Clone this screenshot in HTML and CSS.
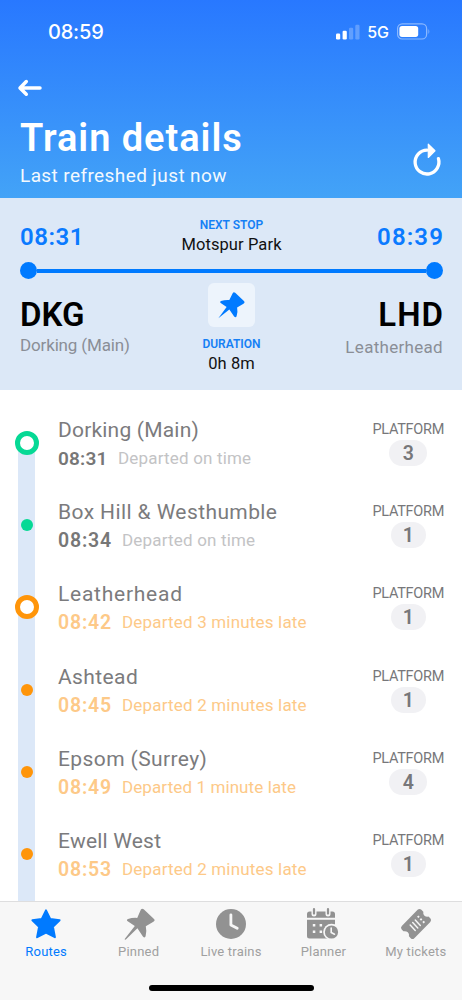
FILE: index.html
```html
<!DOCTYPE html>
<html lang="en">
<head>
<meta charset="utf-8">
<title>Train details</title>
<link rel="stylesheet" href="styles.css">
</head>
<body>
<div class="app">
  <header class="header">
    <div class="status-bar">
      <span class="clock">08:59</span>
      <span class="signals">
        <svg class="cell" viewBox="0 0 24 16"><rect x="0" y="9.5" width="4.2" height="6" rx="1.2"/><rect x="6.6" y="6.8" width="4.2" height="8.7" rx="1.2"/><rect class="dim" x="13" y="3.8" width="4.2" height="11.7" rx="1.2"/><rect class="dim" x="19.3" y="0.8" width="4.2" height="14.7" rx="1.2"/></svg>
        <span class="network">5G</span>
        <svg class="battery" viewBox="0 0 33 17"><rect class="shell" x="0.6" y="0.8" width="29" height="15.2" rx="4.6"/><rect x="2.4" y="2.9" width="18.8" height="11" rx="2.6"/><path class="dim" d="M30.8 6q1.7.8 1.7 2.5t-1.7 2.500z"/></svg>
      </span>
    </div>
    <svg class="back" viewBox="0 0 24 18"><path d="M22 9H2.600M8.300 2.600L2 9l6.300 6.200"/></svg>
    <div class="title-row">
      <div>
        <h1 class="title">Train details</h1>
        <p class="subtitle">Last refreshed just now</p>
      </div>
      <svg class="refresh" viewBox="0 0 28 33"><path class="ring" d="M14 7.200A11.900 11.900 0 1 0 25.400 15.600"/><path class="tip" d="M15.300 1.200v13.300L22 7.800z"/></svg>
    </div>
  </header>

  <section class="summary">
    <div class="times">
      <span class="time">08:31</span>
      <div class="centre"><span class="caption wide">NEXT STOP</span><span class="value next">Motspur Park</span></div>
      <span class="time arrival">08:39</span>
    </div>
    <div class="track"><i class="end"></i><i class="line"></i><i class="end"></i></div>
    <div class="places">
      <div class="place"><span class="code">DKG</span><span class="name">Dorking (Main)</span></div>
      <div class="centre">
        <span class="pin-box"><svg class="pin" viewBox="0 0 32 32"><path d="M1.500 30.200L10.600 17.700L4.100 13.200Q2.400 11.800 4.400 10.900Q8.600 9.600 13.600 9.900L17.300 2.400Q18.400.400 20.100 2L29.700 11.100Q31.300 13 29.200 14L22.200 18.200Q23.200 23.500 21.600 27.900Q20.800 30 18.900 28.100L13.600 20.400z"/></svg></span>
        <span class="caption">DURATION</span><span class="value">0h 8m</span>
      </div>
      <div class="place right"><span class="code">LHD</span><span class="name">Leatherhead</span></div>
    </div>
  </section>

  <main class="stops">
    <article class="stop first"><div class="rail"><i class="ring-dot green"></i></div><div class="info"><h2 class="tight">Dorking (Main)</h2><p class="ontime"><b>08:31</b><span>Departed on time</span></p></div><div class="platform"><span class="label">PLATFORM</span><span class="number">3</span></div></article>
    <article class="stop"><div class="rail"><i class="dot green"></i></div><div class="info"><h2>Box Hill &amp; Westhumble</h2><p class="ontime"><b>08:34</b><span>Departed on time</span></p></div><div class="platform"><span class="label">PLATFORM</span><span class="number one">1</span></div></article>
    <article class="stop"><div class="rail"><i class="ring-dot orange"></i></div><div class="info"><h2 class="loose">Leatherhead</h2><p class="late"><b>08:42</b><span>Departed 3 minutes late</span></p></div><div class="platform"><span class="label">PLATFORM</span><span class="number one">1</span></div></article>
    <article class="stop"><div class="rail"><i class="dot orange"></i></div><div class="info"><h2>Ashtead</h2><p class="late"><b>08:45</b><span>Departed 2 minutes late</span></p></div><div class="platform"><span class="label">PLATFORM</span><span class="number one">1</span></div></article>
    <article class="stop"><div class="rail"><i class="dot orange"></i></div><div class="info"><h2>Epsom (Surrey)</h2><p class="late"><b>08:49</b><span class="minute">Departed 1 minute late</span></p></div><div class="platform"><span class="label">PLATFORM</span><span class="number">4</span></div></article>
    <article class="stop last"><div class="rail"><i class="dot orange"></i></div><div class="info"><h2 class="tight">Ewell West</h2><p class="late"><b>08:53</b><span>Departed 2 minutes late</span></p></div><div class="platform"><span class="label">PLATFORM</span><span class="number one">1</span></div></article>
  </main>

  <footer class="footer">
    <nav class="tabs">
      <a class="tab active"><svg viewBox="0 0 32 32"><path stroke-linejoin="round" stroke-width="2" stroke="currentColor" d="M16 2.400L20.200 10.900L29.600 12.200L22.900 18.700L24.900 29.200L16 24.700L7.100 29.200L9.100 18.700L2.400 12.200L11.800 10.900z"/></svg><span>Routes</span></a>
      <a class="tab"><svg viewBox="0 0 32 32"><path d="M1.500 31.200L11.800 18L4.700 13.200Q3 11.800 5 10.900Q9.200 9.600 14.200 9.900L17.900 1.600Q19 0 20.700 1.300L31 11Q32.500 12.600 30.400 13.700L22.800 18.200Q24 23.500 22.600 28.300Q21.800 30.400 19.900 28.500L14.400 20.300L2.600 31.700z"/></svg><span>Pinned</span></a>
      <a class="tab"><svg viewBox="0 0 32 32"><circle cx="16" cy="16" r="15"/><path class="cut" d="M15.900 6.800V17l6.300 3.300"/></svg><span>Live trains</span></a>
      <a class="tab planner"><svg viewBox="0 0 34 32"><path d="M1 9.800V6q0-2.600 2.600-2.600h22.800Q29 3.400 29 6v3.800zM1 11.800h28V30.500H3.600Q1 30.500 1 28z"/><path class="gap" d="M8 1v5M22 1v5"/><path class="hooks" d="M8 1v4.600M22 1v4.600"/><g class="paper"><rect x="6.800" y="16" width="2.500" height="2.500"/><rect x="13.600" y="16" width="2.500" height="2.500"/><rect x="6.800" y="22.500" width="2.500" height="2.500"/><rect x="13.600" y="22.500" width="2.500" height="2.500"/><circle cx="25.500" cy="24" r="8.300"/></g><circle cx="25.500" cy="24" r="6.600"/><path class="clock-hands" d="M25.200 20v4.500l3.300 1.700"/></svg><span>Planner</span></a>
      <a class="tab ticket"><svg viewBox="0 0 34 34"><path d="M18.700 1.900q2-1.900 4 0l2.100 2q-.6 2.800 1.200 4.300 1.800 1.400 4.200.9l2 1.900q1.700 1.900 0 3.800L15.200 32.100q-1.900 1.900-3.800 0l-1.900-2q.6-2.700-1.200-4.300-1.800-1.500-4.600-1l-1.900-1.900q-1.600-1.900.1-3.800z"/><path class="stubs" d="M10.800 18.100l5.400 5.800M13.500 15.400l5.400 5.800M16.200 12.700l5.400 5.800"/><path class="perforation" d="M18.800 8.600l7.800 7.800"/></svg><span>My tickets</span></a>
    </nav>
    <i class="home-indicator"></i>
  </footer>
</div>
</body>
</html>
```
FILE: styles.css
```css
* { box-sizing: border-box; margin: 0; padding: 0; }
body { font-family: Roboto, "Liberation Sans", sans-serif; background: #fff; }
svg { display: block; fill: currentColor; overflow: visible; }
i { display: block; }
.app { width: 462px; height: 1000px; display: flex; flex-direction: column; overflow: hidden; }

.header { height: 198px; flex: none; background: linear-gradient(#2878ff, #43a3f7); color: #fff; }
.status-bar { height: 63px; padding: 0 32px 0 48px; display: flex; justify-content: space-between; align-items: center; font-family: Inter, sans-serif; font-weight: 600; }
.clock { font-size: 20px; letter-spacing: -0.2px; font-weight: 500; }
.signals { display: flex; align-items: center; }
.cell { width: 24px; height: 16px; }
.dim { opacity: 0.25; }
.network { margin: 0 8px 0 7px; font-size: 16px; font-weight: 500; }
.battery { width: 33px; height: 17px; }
.shell { fill: none; stroke: #fff; stroke-opacity: 0.45; stroke-width: 1.200; }
.back { width: 24px; height: 18px; margin: 16px 0 0 18px; fill: none; stroke: #fff; stroke-width: 3.500; stroke-linecap: round; stroke-linejoin: round; }
.title-row { display: flex; justify-content: space-between; padding: 18px 21px 0 20px; }
.title { font-size: 38px; line-height: 46px; font-weight: 600; letter-spacing: 0.95px; }
.subtitle { font-size: 19px; line-height: 27px; letter-spacing: 0.4px; padding-top: 1px; opacity: 0.94; }
.refresh { width: 28px; height: 33px; margin-top: 28px; }
.ring { fill: none; stroke: #fff; stroke-width: 3.300; stroke-linecap: round; }
.tip { stroke: #fff; stroke-width: 1.200; stroke-linejoin: round; }

.summary { height: 192px; flex: none; background: #dce8f7; padding: 18px 19px 0 20px; }
.times { height: 46px; display: grid; grid-template-columns: 1fr auto 1fr; }
.time { color: #0a7aff; font-size: 24px; line-height: 43px; font-weight: 600; letter-spacing: 0.5px; }
.arrival { text-align: right; letter-spacing: 1.100px; margin-right: -1px; }
.centre { display: flex; flex-direction: column; align-items: center; }
.caption { color: #1580f5; font-size: 12px; line-height: 17px; font-weight: 600; padding-top: 1px; }
.value { color: #111; font-size: 16.500px; line-height: 22px; letter-spacing: 0.1px; }
.track { height: 17px; display: flex; align-items: center; }
.end { width: 17px; height: 17px; border-radius: 50%; background: #007aff; }
.line { flex: 1; height: 4px; background: #007aff; }
.places { display: grid; grid-template-columns: 1fr auto 1fr; padding-top: 4px; }
.place { display: flex; flex-direction: column; padding-top: 11px; }
.right { align-items: flex-end; }
.code { font-size: 33px; line-height: 42px; font-weight: 600; color: #000; }
.right .code { letter-spacing: 1px; margin-right: -1px; }
.name { font-size: 17px; line-height: 18px; color: #8a8e96; letter-spacing: -0.15px; }
.right .name { line-height: 22px; letter-spacing: 0.3px; }
.pin-box { width: 47px; height: 44px; border-radius: 6px; background: #edf4fc; color: #007aff; display: grid; place-items: center; margin-bottom: 8px; }
.pin { width: 29px; height: 29px; }

.stops { flex: 1; padding-top: 12px; overflow: hidden; min-height: 0; }
.stop { height: 82.200px; display: grid; grid-template-columns: 17px 1fr auto; padding: 0 18px; }
.rail { background: #dce8f8; display: flex; justify-content: center; align-items: center; }
.first .rail { background: linear-gradient(transparent 41px, #dce8f8 41px); }
.last .rail { height: 110px; padding-bottom: 28px; }
.ring-dot { flex: none; width: 24px; height: 24px; border: 5px solid; border-radius: 50%; background: #fff; }
.dot { flex: none; width: 12px; height: 12px; border-radius: 50%; background: currentColor; }
.green { color: #06d995; }
.orange { color: #ff950a; }
.info { padding: 14px 0 0 23px; }
.info h2 { font-size: 21px; line-height: 28px; font-weight: 400; color: #7b7b7d; letter-spacing: 0.4px; }
.info .tight { letter-spacing: 0.2px; }
.info .loose { letter-spacing: 0.75px; }
.info p { display: flex; gap: 10px; font-size: 17px; line-height: 29px; letter-spacing: 0.18px; }
.info b { width: 54px; font-size: 19.500px; font-weight: 600; letter-spacing: 0.8px; }
.first .info b { width: 50px; font-size: 19px; letter-spacing: 0.2px; }
.info .minute { letter-spacing: 0.1px; }
.ontime { color: #c3c3c5; }
.ontime b { color: #777; }
.late { color: #fdc988; }
.platform { display: flex; flex-direction: column; align-items: center; padding-top: 17px; }
.label { font-size: 14.500px; line-height: 21px; color: #77777a; letter-spacing: -0.3px; }
.number { width: 38px; height: 26px; border-radius: 13px; background: #f1f1f4; color: #77777a; text-align: center; font-size: 19.500px; line-height: 27px; font-weight: 600; }
.one { width: 35px; }

.footer { height: 99px; flex: none; background: #f7f7f7; border-top: 1.500px solid #dededf; position: relative; display: flex; flex-direction: column; align-items: center; justify-content: space-between; padding-bottom: 9px; }
.tabs { width: 462px; display: grid; grid-template-columns: repeat(5, 1fr); padding-top: 6px; }
.tab { display: flex; flex-direction: column; align-items: center; color: #929292; }
.tab svg { width: 32px; height: 32px; }
.tab.planner svg { width: 34px; }
.tab span { font-size: 13px; line-height: 20px; margin-top: 2px; color: #a0a0a0; letter-spacing: 0.2px; }
.tab.active, .tab.active span { color: #007aff; }
.cut { fill: none; stroke: #f7f7f7; stroke-width: 2.800; stroke-linecap: round; stroke-linejoin: round; }
.gap { stroke: #f7f7f7; stroke-width: 5; stroke-linecap: round; }
.hooks { stroke: currentColor; stroke-width: 2.200; stroke-linecap: round; }
.paper { fill: #f7f7f7; }
.clock-hands { fill: none; stroke: #f7f7f7; stroke-width: 1.600; stroke-linecap: round; }
.stubs { stroke: #f7f7f7; stroke-width: 1.500; stroke-linecap: round; }
.perforation { stroke: #f7f7f7; stroke-width: 2; stroke-dasharray: 2 2; }
.home-indicator { width: 165px; height: 6px; border-radius: 3px; background: #000; }
```
